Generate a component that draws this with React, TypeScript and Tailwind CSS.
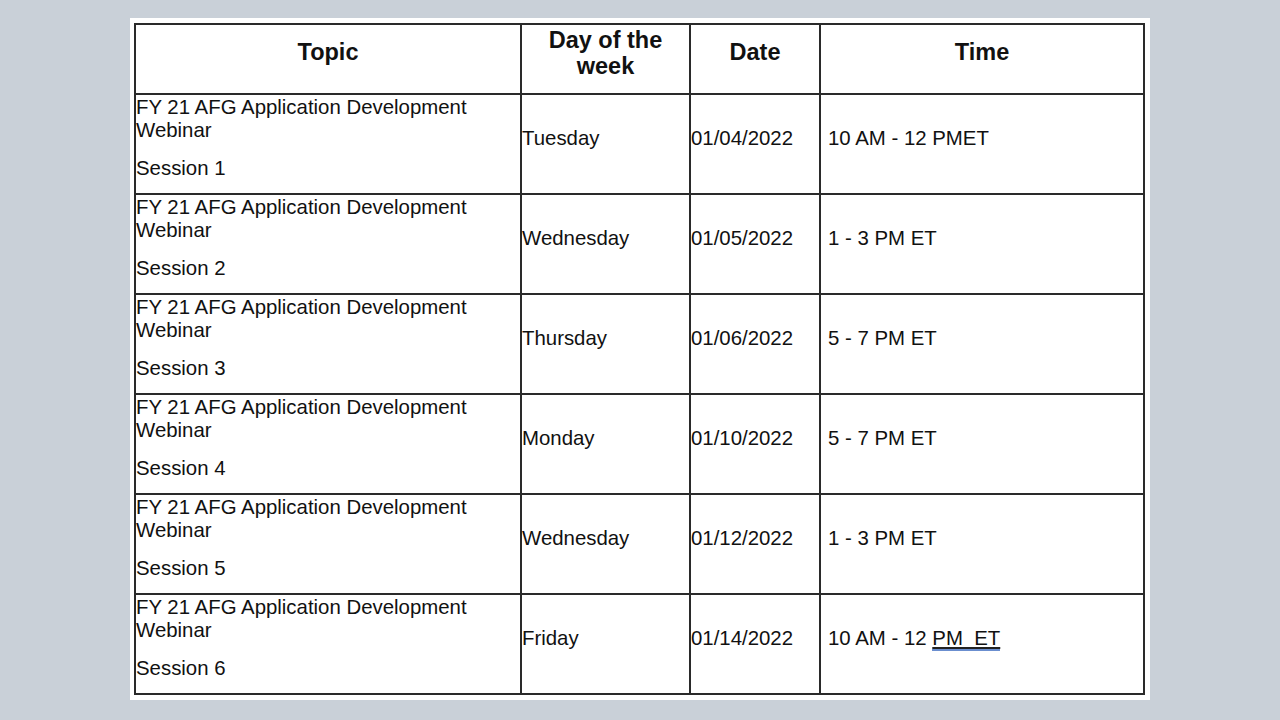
import React from "react";

const rows = [
  { s: "Session 1", day: "Tuesday", date: "01/04/2022", time: "10 AM - 12 PMET" },
  { s: "Session 2", day: "Wednesday", date: "01/05/2022", time: "1 - 3 PM ET" },
  { s: "Session 3", day: "Thursday", date: "01/06/2022", time: "5 - 7 PM ET" },
  { s: "Session 4", day: "Monday", date: "01/10/2022", time: "5 - 7 PM ET" },
  { s: "Session 5", day: "Wednesday", date: "01/12/2022", time: "1 - 3 PM ET" },
  { s: "Session 6", day: "Friday", date: "01/14/2022", time: "" },
];

export default function App() {
  const cell = "border-r-2 border-b-2 border-[#2a2a2a]";
  const head = "font-bold text-[23.5px] leading-[26px]";
  const body = "text-[20.4px] leading-[23px]";
  return (
    <div
      className="w-full h-[720px] bg-[#c9d0d8] pt-[18px] pl-[130px] text-[#111]"
      style={{ fontFamily: '"Liberation Sans", Arial, sans-serif' }}
    >
      <div className="w-[1020px] h-[682px] bg-white pt-[5px] pl-[4px]">
        <div className="grid grid-cols-[386px_169px_130px_324px] grid-rows-[70px_repeat(6,100px)] w-[1011px] border-l-2 border-t-2 border-[#2a2a2a]">
          <div className={`${cell} ${head} flex items-center justify-center pb-[15px]`}>Topic</div>
          <div className={`${cell} ${head} flex items-center justify-center pb-[12px] text-center`}>
            Day of the<br />week
          </div>
          <div className={`${cell} ${head} flex items-center justify-center pb-[15px]`}>Date</div>
          <div className={`${cell} ${head} flex items-center justify-center pb-[15px]`}>Time</div>
          {rows.map((r, i) => (
            <React.Fragment key={i}>
              <div className={`${cell} ${body} flex flex-col justify-center pb-[12px]`}>
                <div>FY 21 AFG Application Development</div>
                <div>Webinar</div>
                <div className="mt-[15px]">{r.s}</div>
              </div>
              <div className={`${cell} ${body} flex items-center pb-[12px]`}>{r.day}</div>
              <div className={`${cell} ${body} flex items-center pb-[12px]`}>{r.date}</div>
              <div className={`${cell} ${body} flex items-center pb-[12px] pl-[7px]`}>
                {r.time ? (
                  r.time
                ) : (
                  <span className="whitespace-pre">
                    10 AM - 12{" "}
                    <span className="underline decoration-[#222] underline-offset-[2px] border-b-2 border-[#6b8fd0]">PM  ET</span>
                  </span>
                )}
              </div>
            </React.Fragment>
          ))}
        </div>
      </div>
    </div>
  );
}
